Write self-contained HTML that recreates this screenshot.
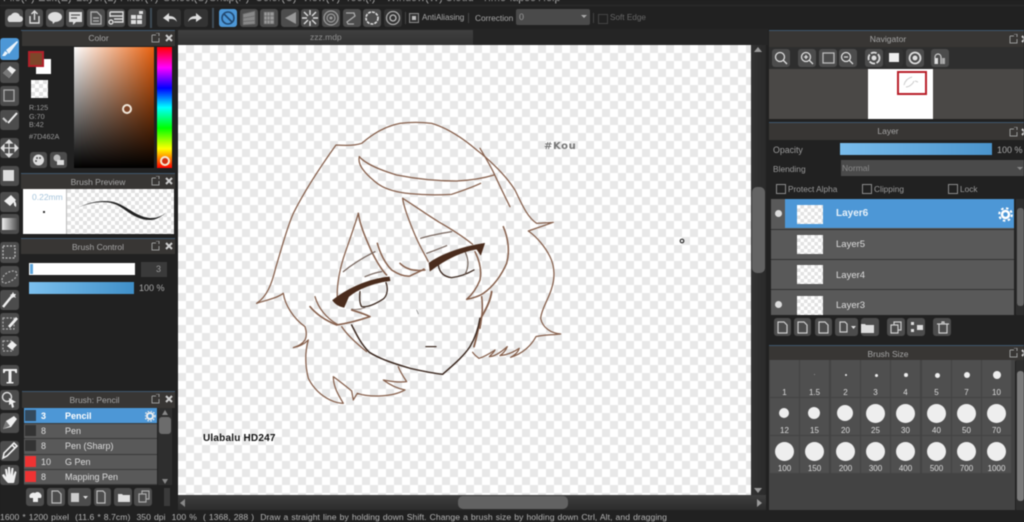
<!DOCTYPE html>
<html><head><meta charset="utf-8">
<style>
html,body{margin:0;padding:0;background:#212121;}
#r{position:relative;width:1024px;height:522px;overflow:hidden;background:#212121;font-family:"Liberation Sans",sans-serif;color:#bbb;font-size:9px;filter:blur(.45px);}
#r div,#r span.a,#r svg.a{position:absolute;}
.b{background:#4c4c4c;border-radius:3px;}
.d{background:#2a2a2a;border-radius:3px;}
.t{white-space:nowrap;}
.h{background:#383634;border-top:1px solid #3f566c;text-align:center;color:#a5a5a5;line-height:16px;font-size:8.5px;}
.ck{background-color:#fff;background-image:conic-gradient(#e8e8e8 25%,#fff 0 50%,#e8e8e8 0 75%,#fff 0);background-size:16px 16px;}
.ck2{background-color:#fff;background-image:conic-gradient(#e2e2e2 25%,#fff 0 50%,#e2e2e2 0 75%,#fff 0);background-size:8px 8px;}
.cb{width:8px;height:8px;border:1px solid #8a8a8a;}
.row{background:#595959;color:#ddd;font-size:9px;line-height:14px;border-bottom:1px solid #3a3a3a;box-sizing:border-box;}
.cell{background:#4f4f4f;width:29px;height:37px;}
.cell i{position:absolute;background:#eee;border-radius:50%;display:block;}
.cell b{position:absolute;left:0;right:0;bottom:0;text-align:center;font-weight:normal;font-size:8px;color:#ddd;}
.w{fill:#ddd;stroke:none}.s{fill:none;stroke:#ddd;stroke-width:1.4}
</style></head><body><div id="r">

<!-- menu -->
<div class="t" style="left:3px;top:-8px;font-size:11px;color:#aaa;width:600px;height:14px;">
<span style="position:absolute;left:0">File(F)</span><span style="position:absolute;left:35px">Edit(E)</span><span style="position:absolute;left:73px">Layer(L)</span><span style="position:absolute;left:117px">Filter(T)</span><span style="position:absolute;left:160px">Select(S)</span><span style="position:absolute;left:206px">Snap(P)</span><span style="position:absolute;left:252px">Color(C)</span><span style="position:absolute;left:299px">View(V)</span><span style="position:absolute;left:342px">Tool(I)</span><span style="position:absolute;left:383px">Window(W)</span><span style="position:absolute;left:442px">Cloud</span><span style="position:absolute;left:479px">Time-lapse</span><span style="position:absolute;left:535px">Help</span></div>
<div style="left:0;top:5px;width:1024px;height:1px;background:#2c2c2c"></div>

<!-- top toolbar -->
<div class="b" style="left:5px;top:9px;width:18px;height:18px"></div>
<div class="b" style="left:25px;top:9px;width:18px;height:18px"></div>
<div class="b" style="left:46px;top:9px;width:18px;height:18px"></div>
<div class="b" style="left:66px;top:9px;width:18px;height:18px"></div>
<div class="b" style="left:87px;top:9px;width:18px;height:18px"></div>
<div class="b" style="left:107px;top:9px;width:18px;height:18px"></div>
<div class="b" style="left:128px;top:9px;width:18px;height:18px"></div>
<div style="left:150px;top:8px;width:2px;height:20px;background:#3f4a55"></div>
<div class="d" style="left:157px;top:9px;width:24px;height:18px;background:#333;"></div>
<div class="d" style="left:184px;top:9px;width:24px;height:18px;background:#333;"></div>
<div style="left:212px;top:8px;width:2px;height:20px;background:#3f4a55"></div>
<div class="b" style="left:219px;top:9px;width:18px;height:18px;background:#4d97d6"></div>
<div class="b" style="left:240px;top:9px;width:18px;height:18px"></div>
<div class="b" style="left:260px;top:9px;width:18px;height:18px"></div>
<div class="b" style="left:281px;top:9px;width:18px;height:18px"></div>
<div class="b" style="left:301px;top:9px;width:18px;height:18px"></div>
<div class="b" style="left:322px;top:9px;width:18px;height:18px"></div>
<div class="b" style="left:343px;top:9px;width:18px;height:18px"></div>
<div class="b" style="left:363px;top:9px;width:18px;height:18px"></div>
<div class="d" style="left:384px;top:9px;width:18px;height:18px;background:#333;"></div>
<svg class="a" style="left:0;top:0" width="410" height="30">
<path class="w" d="M9 22h11a3 3 0 0 0 0-6 5 5 0 0 0-9-1 4 4 0 0 0-2 7z"/>
<path class="s" d="M30 16v7h9v-7M34.500 20v-8M31.500 14l3-3 3 3"/>
<ellipse class="w" cx="55" cy="17" rx="7" ry="5"/><path class="w" d="M52 20l1 4 3-3z"/>
<path class="w" d="M69 12h13v10h-6l-3 3v-3h-4z"/><path d="M71 15h9M71 18h6" stroke="#555" stroke-width="1.2"/>
<path class="s" style="stroke:#aaa" d="M91 12h6l4 4v8H91zM93 18h6M93 21h6"/>
<path class="s" d="M110 12h13v10h-9M110 12v5M110 16h13M114 19h9"/><circle class="s" cx="111" cy="22" r="2"/>
<path class="w" d="M131 15h5v4h-5zM137 15h5v4h-5zM131 20h5v4h-5zM137 20h5v4h-5zM139 11h4v3h-4z"/>
<path class="w" d="M163 18l6-5v3c5 0 7 2 8 6-2-3-4-3-8-3v3z"/>
<path class="w" d="M202 18l-6-5v3c-5 0-7 2-8 6 2-3 4-3 8-3v3z"/>
<circle cx="228" cy="18" r="6" fill="none" stroke="#234a72" stroke-width="1.6"/><path d="M224 14l8 8" stroke="#234a72" stroke-width="1.6"/>
<path d="M243 14l12-3v13l-12 1zM243 18l12-2M243 21.500l12-1" fill="#888" stroke="#666" stroke-width=".7"/>
<path d="M264 12h10v12h-10zM267 12v12M270 12v12M264 16h10M264 20h10" fill="#999" stroke="#666" stroke-width=".7"/>
<path d="M285 18l11-6v12z" fill="#999"/>
<path d="M310 10v5M310 21v5M302 18h5M313 18h5M304 12l4 4M316 12l-4 4M304 24l4-4M316 24l-4-4" stroke="#ddd" stroke-width="1.4"/>
<circle cx="331" cy="18" r="7" fill="none" stroke="#999" stroke-width="1.3"/><circle cx="331" cy="18" r="4" fill="none" stroke="#999" stroke-width="1.2"/><circle cx="331" cy="18" r="1.500" fill="#999"/>
<path d="M346 13h8l1 3-8 6 1 2h6" fill="none" stroke="#aaa" stroke-width="1.3"/>
<circle cx="372" cy="18" r="6" fill="none" stroke="#ddd" stroke-width="1.600" stroke-dasharray="3 1"/>
<circle cx="393" cy="18" r="6.500" fill="none" stroke="#aaa" stroke-width="1.300"/><circle cx="393" cy="18" r="3" fill="none" stroke="#bbb" stroke-width="1.300"/>
</svg>
<div style="left:405px;top:12px;width:1px;height:12px;background:#444"></div>
<div class="cb" style="left:409px;top:13px;background:#333"></div><div style="left:412px;top:16px;width:4px;height:4px;background:#bbb"></div>
<div class="t" style="left:422px;top:13px;color:#a8a8a8;font-size:8.100px">AntiAliasing</div>
<div style="left:468px;top:13px;width:1px;height:10px;background:#444"></div>
<div class="t" style="left:475px;top:13px;color:#a8a8a8;font-size:8.300px">Correction</div>
<div style="left:516px;top:9px;width:74px;height:16px;background:#4a4a4a;border-radius:2px;color:#999;line-height:16px;text-indent:3px;">0</div>
<svg class="a" style="left:581px;top:15px" width="7" height="5"><path d="M0 0h6l-3 3z" fill="#aaa"/></svg>
<div style="left:593px;top:13px;width:1px;height:10px;background:#444"></div>
<div class="cb" style="left:598px;top:14px;border-color:#444"></div>
<div class="t" style="left:610px;top:13px;color:#666;font-size:8.200px">Soft Edge</div>

<!-- left tools -->
<div class="b" style="left:0;top:38px;width:19px;height:22px;background:#4d97d6"></div>
<div class="b" style="left:0;top:62px;width:19px;height:21px"></div>
<div class="b" style="left:0;top:86px;width:19px;height:20px"></div>
<div class="b" style="left:0;top:110px;width:19px;height:20px"></div>
<div class="b" style="left:0;top:138px;width:19px;height:20px"></div>
<div class="b" style="left:0;top:166px;width:19px;height:20px"></div>
<div class="b" style="left:0;top:192px;width:19px;height:20px"></div>
<div class="b" style="left:0;top:214px;width:19px;height:20px"></div>
<div class="b" style="left:0;top:242px;width:19px;height:21px"></div>
<div class="b" style="left:0;top:266px;width:19px;height:21px"></div>
<div class="b" style="left:0;top:290px;width:19px;height:20px"></div>
<div class="b" style="left:0;top:313px;width:19px;height:21px"></div>
<div class="b" style="left:0;top:336px;width:19px;height:20px"></div>
<div class="b" style="left:0;top:365px;width:19px;height:21px"></div>
<div class="b" style="left:0;top:390px;width:19px;height:20px"></div>
<div class="b" style="left:0;top:413px;width:19px;height:20px"></div>
<div class="b" style="left:0;top:441px;width:19px;height:20px"></div>
<div class="b" style="left:0;top:465px;width:19px;height:20px"></div>
<svg class="a" style="left:0;top:0" width="20" height="490">
<path d="M2 56l3-5 3 2-3 3zM6 50L17 41l1 1-9 12z" fill="#eaf3fb"/>
<path d="M3 73l7-7 6 4-7 8z" fill="#eee"/><path d="M3 73l4-4 5 5-3 4z" fill="#777"/>
<rect x="4" y="90" width="10" height="11" fill="none" stroke="#aaa" stroke-width="1.300"/>
<path d="M3 118l4 4" stroke="#ccc" stroke-width="2"/><path d="M8 123L17 113" stroke="#eee" stroke-width="2"/>
<path d="M9 141v15M2 148h15M9 140l-3 3h6zM9 157l-3-3h6zM1 148l3-3v6zM18 148l-3-3v6z" fill="#ddd" stroke="#ddd" stroke-width="1.200"/>
<rect x="3" y="170" width="11" height="11" fill="#ddd"/>
<path d="M4 201l7-6 5 5-6 6zM14 200q3 3 2 7-3-1-2-7z" fill="#eee"/>
<defs><linearGradient id="g" x1="0" x2="1"><stop offset="0" stop-color="#eee"/><stop offset="1" stop-color="#555"/></linearGradient></defs>
<rect x="2" y="218" width="15" height="12" fill="url(#g)"/>
<rect x="3" y="246" width="12" height="12" fill="none" stroke="#bbb" stroke-width="1.300" stroke-dasharray="2 1.500"/>
<path d="M2 280c0-5 7-9 11-9s5 3 3 6-10 7-12 6-2-2-2-3z" fill="none" stroke="#aaa" stroke-width="1.300" stroke-dasharray="2 1.500"/>
<path d="M3 307l9-11" stroke="#eee" stroke-width="2.500"/><path d="M13 292l1 2 2 0-1 2 1 2-2-1-2 1 0-2-2-1 2-1z" fill="#eee"/>
<rect x="3" y="318" width="11" height="11" fill="none" stroke="#aaa" stroke-width="1.200" stroke-dasharray="2 1.500"/><path d="M8 326l8-9 2 2-8 9z" fill="#eee"/>
<rect x="3" y="341" width="10" height="10" fill="none" stroke="#aaa" stroke-width="1.200" stroke-dasharray="2 1.500"/><path d="M7 346l5-5 5 4-5 5z" fill="#eee"/>
<path d="M3 369h14v4h-1.500l-1-2H11.500v11H13.500v1.500h-7V382h2V371H5.500l-1 2H3z" fill="#eee"/>
<circle cx="7" cy="397" r="4.500" fill="none" stroke="#ddd" stroke-width="1.400"/><path d="M9 398l7 4-3 1 1 4-2 1-1-4-2 1z" fill="#eee"/>
<path d="M3 429l3-8 8-5 3 3-6 8z" fill="#eee"/><path d="M3 429l3-8 4 5z" fill="#777"/>
<path d="M3 458l1-5 8-8 3 3-8 8zM12 445l2-2 3 3-2 2z" fill="none" stroke="#eee" stroke-width="1.600"/>
<path d="M8 483c-2-2-5-5-6-8l2-1 2 3-1-8 2 0 1 6 0-8 2 0 .5 8 1-7h2l-.5 8 2-5 1.500 1-2 9c0 2-1 2-2 2z" fill="#eee"/>
</svg>

<!-- Color panel -->
<div style="left:21px;top:30px;width:154px;height:1px;background:#3f566c"></div>
<div style="left:22px;top:31px;width:153px;height:15px;background:#383634;text-align:center;line-height:15px;color:#a5a5a5;font-size:8.5px;">Color</div>
<svg class="a" style="left:150px;top:33px" width="24" height="10"><path d="M2 2h4M2 2v7h7V5M6 0h3v3" fill="none" stroke="#999" stroke-width="1"/><path d="M16 2l6 6M22 2l-6 6" stroke="#ccc" stroke-width="2"/></svg>
<div style="left:36px;top:59px;width:15px;height:15px;background:#fff"></div>
<div style="left:28px;top:51px;width:12px;height:12px;background:#7d462a;border:2.500px solid #b0202a"></div>
<div class="ck2" style="left:31px;top:80px;width:17px;height:18px"></div>
<div style="left:29px;top:104px;line-height:8.500px;color:#999;font-size:7.200px">R:125<br>G:70<br>B:42</div>
<div style="left:29px;top:132px;color:#999;font-size:7.300px">#7D462A</div>
<div class="b" style="left:30px;top:152px;width:17px;height:16px"></div>
<div class="b" style="left:50px;top:152px;width:17px;height:16px"></div>
<svg class="a" style="left:30px;top:152px" width="38" height="16"><circle cx="8.500" cy="8" r="5.500" fill="#ddd"/><circle cx="7" cy="6" r="1" fill="#555"/><circle cx="10" cy="6" r="1" fill="#555"/><circle cx="6" cy="9" r="1" fill="#555"/><circle cx="27" cy="6" r="3.500" fill="#bbb"/><rect x="27" y="8" width="7" height="5" fill="#ddd"/></svg>
<div style="left:74px;top:47px;width:80px;height:121px;background:linear-gradient(to bottom,rgba(0,0,0,0),#000),linear-gradient(to right,#fff,#e8610f)"></div>
<div style="left:122px;top:104px;width:6px;height:6px;border:2.500px solid #f0e6d8;border-radius:50%;background:#7d462a"></div>
<div style="left:157px;top:47px;width:15px;height:121px;background:linear-gradient(to bottom,#f00,#f0f 17%,#00f 34%,#0ff 50%,#0f0 67%,#ff0 84%,#f00)"></div>
<div style="left:160px;top:156px;width:6px;height:6px;border:2.500px solid #f5e8d0;border-radius:50%;background:#d03010"></div>

<!-- Brush Preview -->
<div class="h" style="left:21px;top:173px;width:154px;height:15px;"><span style="margin-right:0">Brush Preview</span></div>
<svg class="a" style="left:150px;top:176px" width="24" height="10"><path d="M2 2h4M2 2v7h7V5M6 0h3v3" fill="none" stroke="#999" stroke-width="1"/><path d="M16 2l6 6M22 2l-6 6" stroke="#ccc" stroke-width="2"/></svg>
<div class="ck2" style="left:23px;top:189px;width:151px;height:45px"></div>
<div style="left:23px;top:189px;width:43px;height:45px;background:#fff;border-right:1px solid #bbb"></div>
<div class="t" style="left:32px;top:192px;color:#a8c6dc;font-size:8.500px">0.22mm</div>
<div style="left:43px;top:211px;width:2px;height:2px;background:#333"></div>
<svg class="a" style="left:66px;top:189px" width="108" height="45"><path d="M11 19C25 12 40 10 51 14C62 18 72 29 86 29C92 29 97 26 101 23C95 28 90 31 84 31C70 31 62 22 51 16C40 11 25 13 11 19Z" fill="#222"/></svg>

<!-- Brush Control -->
<div class="h" style="left:21px;top:238px;width:154px;height:15px;">Brush Control</div>
<svg class="a" style="left:150px;top:241px" width="24" height="10"><path d="M2 2h4M2 2v7h7V5M6 0h3v3" fill="none" stroke="#999" stroke-width="1"/><path d="M16 2l6 6M22 2l-6 6" stroke="#ccc" stroke-width="2"/></svg>
<div style="left:29px;top:263px;width:106px;height:12px;background:#fff"></div>
<div style="left:30px;top:264px;width:3px;height:10px;background:#5fa5db"></div>
<div style="left:141px;top:262px;width:26px;height:15px;background:#3a3a3a;color:#999;text-align:right;line-height:15px;font-size:9px;"><span style="padding-right:6px">3</span></div>
<div style="left:29px;top:282px;width:105px;height:12px;background:linear-gradient(to right,#7cc0ee,#3f8fc8)"></div>
<div class="t" style="left:139px;top:283px;color:#aaa;font-size:9px">100 %</div>

<!-- Brush list -->
<div class="h" style="left:22px;top:391px;width:153px;height:16px;"><span style="margin-left:-8px">Brush: Pencil</span></div>
<svg class="a" style="left:150px;top:394px" width="24" height="10"><path d="M2 2h4M2 2v7h7V5M6 0h3v3" fill="none" stroke="#999" stroke-width="1"/><path d="M16 2l6 6M22 2l-6 6" stroke="#ccc" stroke-width="2"/></svg>
<div class="row" style="left:24px;top:408px;width:133px;height:16px;background:#4d97d6;color:#fff;font-weight:bold"><span class="a" style="left:1px;top:2px;width:11px;height:11px;background:#33495c"></span><span class="a" style="left:17px;top:1px">3</span><span class="a" style="left:41px;top:1px">Pencil</span></div>
<svg class="a" style="left:145px;top:411px" width="11" height="11"><circle cx="5" cy="5" r="3" fill="none" stroke="#eee" stroke-width="2"/><circle cx="5" cy="5" r="5" fill="none" stroke="#eee" stroke-width="1.300" stroke-dasharray="1.500 1.500"/></svg>
<div class="row" style="left:24px;top:424px;width:133px;height:15px;"><span class="a" style="left:1px;top:1px;width:11px;height:11px;background:#333"></span><span class="a" style="left:17px;top:0">8</span><span class="a" style="left:41px;top:0">Pen</span></div>
<div class="row" style="left:24px;top:439px;width:133px;height:16px;"><span class="a" style="left:1px;top:1px;width:11px;height:11px;background:#333"></span><span class="a" style="left:17px;top:0">8</span><span class="a" style="left:41px;top:0">Pen (Sharp)</span></div>
<div class="row" style="left:24px;top:455px;width:133px;height:15px;"><span class="a" style="left:1px;top:1px;width:11px;height:11px;background:#ee3333"></span><span class="a" style="left:17px;top:0">10</span><span class="a" style="left:41px;top:0">G Pen</span></div>
<div class="row" style="left:24px;top:470px;width:133px;height:15px;"><span class="a" style="left:1px;top:1px;width:11px;height:11px;background:#ee3333"></span><span class="a" style="left:17px;top:0">8</span><span class="a" style="left:41px;top:0">Mapping Pen</span></div>
<div style="left:158px;top:408px;width:14px;height:77px;background:#2e2e2e"></div>
<div style="left:159px;top:417px;width:12px;height:17px;background:#6c6c6c;border-radius:3px"></div>
<svg class="a" style="left:160px;top:410px" width="10" height="74"><path d="M2 5l3-5 3 5zM2 69l3 5 3-5z" fill="#888"/></svg>
<div class="b" style="left:26px;top:488px;width:18px;height:18px"></div>
<div class="b" style="left:47px;top:488px;width:18px;height:18px"></div>
<div class="b" style="left:68px;top:488px;width:23px;height:18px"></div>
<div class="b" style="left:94px;top:488px;width:17px;height:18px"></div>
<div class="b" style="left:114px;top:488px;width:18px;height:18px"></div>
<div class="b" style="left:134px;top:488px;width:18px;height:18px"></div>
<div style="left:164px;top:488px;width:6px;height:18px;background:#3a3a3a"></div>
<svg class="a" style="left:26px;top:488px" width="128" height="18"><path d="M4 10a4 3.500 0 0 1 5-5 4 4 0 0 1 6 5zM7 10h5v4H7z" fill="#eee"/><path d="M26 3h6l3 3v9h-9z" fill="none" stroke="#bbb" stroke-width="1.200"/><rect x="45" y="5" width="8" height="9" fill="#ccc"/><path d="M57 8h5l-2.500 3z" fill="#ddd"/><path d="M71 3h6l2 2v10h-8z" fill="none" stroke="#bbb" stroke-width="1.200"/><path d="M92 6h4l1 1h7v7H92z" fill="#ddd"/><path d="M113 6h7v8h-7zM116 6V3h7v8h-3" fill="none" stroke="#aaa" stroke-width="1.200"/></svg>

<!-- Canvas -->
<div style="left:176px;top:29px;width:592px;height:16px;background:#252525"></div>
<div style="left:178px;top:30px;width:295px;height:15px;background:linear-gradient(#3f3f3f,#333);text-align:right;color:#8f8f8f;font-size:8.500px;line-height:15px;"><span style="position:absolute;left:132px">zzz.mdp</span></div>
<div class="ck" style="left:178px;top:45px;width:573px;height:450px;"></div>

<svg class="a" style="left:178px;top:45px" width="573" height="450" viewBox="178 45 573 450">
<g transform="translate(250,115) scale(.3333)" fill="none" stroke="#86604c" stroke-width="3.800" stroke-linecap="round" stroke-linejoin="round">
<path d="M20 565C50 545 65 510 78 455C95 400 110 340 130 295C165 225 215 150 258 90C285 92 315 92 335 85C365 60 400 35 450 25C490 20 520 22 545 25C590 38 640 70 680 105C720 135 770 185 795 225C815 265 830 305 860 325L910 322L835 348C860 365 885 395 900 425C915 455 915 490 905 520C895 555 875 580 872 610C878 640 905 655 932 657C905 660 875 660 858 665C845 690 820 715 782 727C795 720 805 710 808 700C790 712 770 720 750 722C760 715 768 705 772 695C755 710 735 725 718 725C725 718 732 712 735 705C720 715 705 725 687 730C680 725 672 718 668 712"/>
<path d="M20 565C50 555 80 550 100 535C105 570 130 610 165 635C170 650 170 665 165 675C155 690 140 695 130 698C150 695 165 685 175 675C165 710 165 750 175 790C190 820 210 840 240 855C255 862 270 865 280 865C265 840 250 815 250 785C270 800 290 815 305 828L310 855L322 835C350 845 420 850 465 825C440 820 420 810 400 795C425 800 450 803 470 800C460 785 450 770 445 755"/>
<path d="M328 125C345 145 390 165 440 180C500 192 560 198 620 198C660 196 700 190 732 180"/>
<path d="M328 125C322 150 345 175 375 200C400 222 440 232 480 236C520 240 570 240 605 238C635 228 665 218 692 205"/>
<path d="M690 100C705 125 720 150 732 175C748 210 765 245 780 275"/>
<path d="M458 250C462 280 478 320 495 360C510 395 525 420 535 440"/>
<path d="M458 250C490 270 525 295 565 320C600 340 640 365 668 388"/>
<path d="M512 370C545 360 575 355 605 350M530 415C550 408 570 400 590 392" stroke="#77665e"/>
<path d="M325 295C315 330 295 385 280 430C268 470 260 510 262 550"/>
<path d="M325 295C330 330 345 365 365 410C380 440 395 465 410 480" stroke-width="4.500"/>
<path d="M280 470C310 445 345 425 375 410M345 485C362 478 380 472 395 470" stroke="#77665e"/>
<path d="M382 385C392 420 405 445 425 465C445 478 465 485 480 483C495 475 510 470 522 462" stroke-width="4.500"/>
<path d="M450 445C465 460 490 470 525 465" stroke-width="4.500"/>
<path d="M180 575C205 605 235 620 260 630C295 625 330 615 360 605C340 595 320 590 305 585" stroke-width="5"/>
<path d="M195 545C205 580 230 610 262 628" />
<path d="M275 635C295 665 325 690 350 710"/>
<path d="M760 335C775 370 780 410 770 445C755 480 730 515 700 535C685 545 665 550 650 553C665 540 680 520 690 495C695 470 690 440 675 410" stroke-width="4.500"/>
<path d="M725 530C722 555 710 580 695 605C685 635 682 660 672 695" stroke-width="5.500"/>
<path d="M695 545C700 580 695 610 690 640" stroke-width="4.500"/>
<g stroke="#3d2b22">
<path d="M305 630C320 660 335 690 358 712C395 735 440 748 480 760C515 768 550 775 578 778C610 750 640 725 660 695C675 670 685 640 690 610" stroke-width="4.500"/>
<path d="M330 530C328 550 328 565 335 575C355 578 380 565 400 552C412 542 415 520 408 503" stroke-width="4"/>
<path d="M565 450C568 470 580 485 605 488C630 485 655 475 672 465" stroke-width="4"/>
<path d="M645 410C655 430 658 455 645 478" stroke-width="3.500" stroke="#6a5a50"/>
<path d="M305 582C320 585 335 582 345 578" stroke-width="2.500" stroke="#77665e"/>
<path d="M528 695H558" stroke-width="4"/>
<path d="M500 585L505 597" stroke-width="2" stroke="#777"/>
</g>
<path d="M248 556C280 530 345 492 418 486L420 497C375 502 325 520 296 545L282 577C270 575 258 570 248 556Z" fill="#4a2c1d" stroke="#4a2c1d" stroke-width="2"/>
<path d="M537 444C580 415 640 395 704 385L692 420L680 402C640 408 590 430 540 468Z" fill="#4a2c1d" stroke="#4a2c1d" stroke-width="2"/>
</g>
<circle cx="682" cy="241" r="1.800" fill="none" stroke="#333" stroke-width="1.200"/>
</svg>
<div class="t" style="left:544px;top:141px;font-family:'DejaVu Sans',sans-serif;font-weight:bold;font-size:10px;color:#777;letter-spacing:.6px">#Kou</div>
<div class="t" style="left:203px;top:433px;font-weight:bold;font-size:10px;color:#111;letter-spacing:.2px">Ulabalu HD247</div>

<!-- scrollbars -->
<div style="left:751px;top:45px;width:15px;height:450px;background:linear-gradient(to right,#333,#2a2a2a)"></div>
<div style="left:752px;top:187px;width:13px;height:86px;background:#636363;border-radius:5px"></div>
<svg class="a" style="left:754px;top:47px" width="9" height="6"><path d="M0 5l4-5 4 5z" fill="#999"/></svg>
<svg class="a" style="left:754px;top:488px" width="9" height="6"><path d="M0 0l4 5 4-5z" fill="#999"/></svg>
<div style="left:178px;top:495px;width:588px;height:15px;background:linear-gradient(#3e3e3e,#2c2c2c)"></div>
<div style="left:458px;top:496px;width:110px;height:13px;background:#626262;border-radius:5px"></div>
<svg class="a" style="left:180px;top:499px" width="6" height="8"><path d="M5 0L0 4l5 4z" fill="#888"/></svg>
<svg class="a" style="left:757px;top:499px" width="6" height="8"><path d="M0 0l5 4-5 4z" fill="#999"/></svg>

<!-- status -->
<div class="t" style="left:0;top:512px;color:#b4b4b4;font-size:8.600px;word-spacing:.6px;letter-spacing:.05px">1600 * 1200 pixel &nbsp;(11.6 * 8.7cm) &nbsp;350 dpi &nbsp;100 % &nbsp;( 1368, 288 ) &nbsp;Draw a straight line by holding down Shift. Change a brush size by holding down Ctrl, Alt, and dragging</div>

<!-- Navigator -->
<div class="h" style="left:769px;top:30px;width:255px;height:16px;"><span style="margin-left:-17px">Navigator</span></div>
<svg class="a" style="left:1008px;top:34px" width="16" height="10"><path d="M2 2h4M2 2v7h7V5M6 0h3v3" fill="none" stroke="#999" stroke-width="1"/><path d="M14 2l6 6M20 2l-6 6" stroke="#ccc" stroke-width="2"/></svg>
<div style="left:769px;top:47px;width:255px;height:22px;background:#2e2e2e"></div>
<div class="b" style="left:772px;top:49px;width:18px;height:18px"></div>
<div class="b" style="left:798px;top:49px;width:18px;height:18px"></div>
<div class="b" style="left:819px;top:49px;width:18px;height:18px"></div>
<div class="b" style="left:839px;top:49px;width:18px;height:18px"></div>
<div class="b" style="left:865px;top:49px;width:18px;height:18px"></div>
<div class="d" style="left:885px;top:49px;width:18px;height:18px;background:#333"></div>
<div class="b" style="left:906px;top:49px;width:18px;height:18px"></div>
<div class="b" style="left:931px;top:49px;width:18px;height:18px"></div>
<svg class="a" style="left:770px;top:47px" width="182" height="22">
<g fill="none" stroke="#ddd" stroke-width="1.300"><circle cx="10" cy="10" r="4.500"/><path d="M13 13l4 4"/><circle cx="36" cy="10" r="4.500"/><path d="M39 13l4 4M34 10h4M36 8v4"/><rect x="53" y="6" width="11" height="10" stroke="#bbb"/><circle cx="76" cy="10" r="4.500"/><path d="M79 13l4 4M74 10h4"/><circle cx="104" cy="11" r="5.500" stroke-dasharray="6 1.500" stroke-width="1.800"/><circle cx="145" cy="11" r="5.500" stroke-width="1.800"/></g>
<circle cx="104" cy="11" r="2.500" fill="#ddd"/><circle cx="145" cy="11" r="2.500" fill="#ddd"/><rect x="119" y="6" width="10" height="9" fill="#eee"/><path d="M165 17v-7a3 3 0 0 1 6 0v7" fill="none" stroke="#ccc" stroke-width="1.200"/><rect x="165" y="11" width="3" height="6" fill="#ddd"/><rect x="172" y="11" width="3" height="6" fill="#aaa"/>
</svg>
<div style="left:769px;top:69px;width:255px;height:50px;background:#4a4846"></div>
<div style="left:868px;top:69px;width:65px;height:50px;background:#fff"></div>
<div style="left:897px;top:71px;width:26px;height:20px;border:2px solid #b8202a"></div>
<svg class="a" style="left:900px;top:74px" width="22" height="18"><path d="M4 11c1-4 4-7 8-8M6 13c3 0 7-3 8-6M15 7l3 1" fill="none" stroke="#ccc" stroke-width="1"/></svg>

<!-- Layer panel -->
<div class="h" style="left:769px;top:122px;width:255px;height:17px;"><span style="margin-left:-17px">Layer</span></div>
<svg class="a" style="left:1008px;top:127px" width="16" height="10"><path d="M2 2h4M2 2v7h7V5M6 0h3v3" fill="none" stroke="#999" stroke-width="1"/><path d="M14 2l6 6M20 2l-6 6" stroke="#ccc" stroke-width="2"/></svg>
<div class="t" style="left:773px;top:145px;color:#999;font-size:8.800px">Opacity</div>
<div style="left:840px;top:143px;width:152px;height:12px;background:linear-gradient(to right,#79bcec,#4a94cc)"></div>
<div class="t" style="left:997px;top:145px;color:#aaa;font-size:9px">100 %</div>
<div class="t" style="left:773px;top:164px;color:#999;font-size:8.400px">Blending</div>
<div style="left:841px;top:160px;width:183px;height:16px;background:#4a4a4a;color:#8a8a8a;line-height:16px;text-indent:1px;font-size:8.500px;">Normal</div>
<svg class="a" style="left:1017px;top:167px" width="7" height="4"><path d="M0 0h6l-3 3z" fill="#888"/></svg>
<div class="cb" style="left:776px;top:184px;"></div><div class="t" style="left:788px;top:184px;color:#999;font-size:8.300px">Protect Alpha</div>
<div class="cb" style="left:862px;top:184px;"></div><div class="t" style="left:874px;top:184px;color:#999;font-size:8.300px">Clipping</div>
<div class="cb" style="left:948px;top:184px;"></div><div class="t" style="left:960px;top:184px;color:#999;font-size:8.300px">Lock</div>

<div style="left:771px;top:199px;width:243px;height:116px;background:#595959"></div>
<div style="left:785px;top:199px;width:229px;height:29px;background:#4d97d6"></div>
<div style="left:771px;top:229px;width:243px;height:1px;background:#333"></div>
<div style="left:771px;top:259px;width:243px;height:1px;background:#333"></div>
<div style="left:771px;top:289px;width:243px;height:1px;background:#333"></div>
<div class="ck2" style="left:797px;top:205px;width:26px;height:19px;background-size:7px 7px"></div>
<div class="ck2" style="left:797px;top:235px;width:26px;height:19px;background-size:7px 7px"></div>
<div class="ck2" style="left:797px;top:265px;width:26px;height:19px;background-size:7px 7px"></div>
<div class="ck2" style="left:797px;top:296px;width:26px;height:19px;background-size:7px 7px"></div>
<div style="left:775px;top:210px;width:7px;height:7px;background:#ddd;border-radius:50%"></div>
<div style="left:775px;top:301px;width:7px;height:7px;background:#ddd;border-radius:50%"></div>
<div class="t" style="left:836px;top:208px;color:#e8f2fa;font-size:10px;font-weight:bold;">Layer6</div>
<div class="t" style="left:836px;top:239px;color:#ddd;font-size:9.500px">Layer5</div>
<div class="t" style="left:836px;top:270px;color:#ddd;font-size:9.500px">Layer4</div>
<div class="t" style="left:836px;top:300px;color:#ddd;font-size:9.500px">Layer3</div>
<svg class="a" style="left:998px;top:207px" width="15" height="15"><circle cx="7.500" cy="7.500" r="3.500" fill="none" stroke="#fff" stroke-width="2.500"/><circle cx="7.500" cy="7.500" r="6.300" fill="none" stroke="#fff" stroke-width="2" stroke-dasharray="2.500 2.500"/></svg>
<div style="left:1016px;top:199px;width:8px;height:116px;background:#2e2e2e"></div>
<div style="left:1017px;top:208px;width:7px;height:98px;background:#636363;border-radius:3px"></div>

<div class="b" style="left:774px;top:318px;width:17px;height:18px"></div>
<div class="b" style="left:794px;top:318px;width:17px;height:18px"></div>
<div class="b" style="left:815px;top:318px;width:17px;height:18px"></div>
<div class="b" style="left:835px;top:318px;width:23px;height:18px"></div>
<div class="b" style="left:861px;top:318px;width:18px;height:18px"></div>
<div class="b" style="left:887px;top:318px;width:18px;height:18px"></div>
<div class="b" style="left:907px;top:318px;width:18px;height:18px"></div>
<div class="b" style="left:933px;top:318px;width:18px;height:18px"></div>
<svg class="a" style="left:774px;top:318px" width="180" height="18"><g fill="none" stroke="#ccc" stroke-width="1.200"><path d="M4 4h6l3 3v8H4zM24 4h6l3 3v8h-9zM45 4h6l3 3v8h-9zM66 4h5l2 2v8h-7zM117 7h7v8h-7zM120 7V4h7v8h-3M163 6h12M165 6v9h8V6M168 6V4h2v2"/></g><path d="M87 6h4l1 1h8v8H87z" fill="#ddd"/><rect x="137" y="4" width="3" height="3" fill="#ddd"/><rect x="137" y="11" width="3" height="3" fill="#ddd"/><rect x="143" y="7" width="6" height="5" fill="#ddd"/><path d="M77 8h5l-2.500 3z" fill="#ddd"/></svg>

<!-- Brush Size -->
<div class="h" style="left:769px;top:345px;width:255px;height:15px;"><span style="margin-left:-17px">Brush Size</span></div>
<svg class="a" style="left:1008px;top:348px" width="16" height="10"><path d="M2 2h4M2 2v7h7V5M6 0h3v3" fill="none" stroke="#999" stroke-width="1"/><path d="M14 2l6 6M20 2l-6 6" stroke="#ccc" stroke-width="2"/></svg>
<div style="left:769px;top:360px;width:246px;height:150px;background:#434343"></div>
<div style="left:1016px;top:360px;width:8px;height:150px;background:#2e2e2e"></div>
<div style="left:1017px;top:371px;width:7px;height:130px;background:#7a7a7a;border-radius:3px"></div>

<div class="cell" style="left:770px;top:360px"><b>1</b></div>
<div class="cell" style="left:800px;top:360px"><i style="left:14px;top:14px;width:1px;height:1px;background:#999"></i><b>1.5</b></div>
<div class="cell" style="left:831px;top:360px"><i style="left:14px;top:14px;width:2px;height:2px"></i><b>2</b></div>
<div class="cell" style="left:861px;top:360px"><i style="left:14px;top:14px;width:3px;height:3px"></i><b>3</b></div>
<div class="cell" style="left:891px;top:360px"><i style="left:13px;top:13px;width:4px;height:4px"></i><b>4</b></div>
<div class="cell" style="left:922px;top:360px"><i style="left:13px;top:13px;width:5px;height:5px"></i><b>5</b></div>
<div class="cell" style="left:952px;top:360px"><i style="left:12px;top:12px;width:6px;height:6px"></i><b>7</b></div>
<div class="cell" style="left:982px;top:360px"><i style="left:11px;top:11px;width:8px;height:8px"></i><b>10</b></div>

<div class="cell" style="left:770px;top:398px"><i style="left:9px;top:10px;width:10px;height:10px"></i><b>12</b></div>
<div class="cell" style="left:800px;top:398px"><i style="left:8px;top:9px;width:12px;height:12px"></i><b>15</b></div>
<div class="cell" style="left:831px;top:398px"><i style="left:6px;top:7px;width:16px;height:16px"></i><b>20</b></div>
<div class="cell" style="left:861px;top:398px"><i style="left:5px;top:6px;width:19px;height:19px"></i><b>25</b></div>
<div class="cell" style="left:891px;top:398px"><i style="left:5px;top:6px;width:19px;height:19px"></i><b>30</b></div>
<div class="cell" style="left:922px;top:398px"><i style="left:5px;top:6px;width:19px;height:19px"></i><b>40</b></div>
<div class="cell" style="left:952px;top:398px"><i style="left:5px;top:6px;width:19px;height:19px"></i><b>50</b></div>
<div class="cell" style="left:982px;top:398px"><i style="left:5px;top:6px;width:19px;height:19px"></i><b>70</b></div>

<div class="cell" style="left:770px;top:436px"><i style="left:5px;top:6px;width:19px;height:19px"></i><b>100</b></div>
<div class="cell" style="left:800px;top:436px"><i style="left:5px;top:6px;width:19px;height:19px"></i><b>150</b></div>
<div class="cell" style="left:831px;top:436px"><i style="left:5px;top:6px;width:19px;height:19px"></i><b>200</b></div>
<div class="cell" style="left:861px;top:436px"><i style="left:5px;top:6px;width:19px;height:19px"></i><b>300</b></div>
<div class="cell" style="left:891px;top:436px"><i style="left:5px;top:6px;width:19px;height:19px"></i><b>400</b></div>
<div class="cell" style="left:922px;top:436px"><i style="left:5px;top:6px;width:19px;height:19px"></i><b>500</b></div>
<div class="cell" style="left:952px;top:436px"><i style="left:5px;top:6px;width:19px;height:19px"></i><b>700</b></div>
<div class="cell" style="left:982px;top:436px"><i style="left:5px;top:6px;width:19px;height:19px"></i><b>1000</b></div>

</div></body></html>
